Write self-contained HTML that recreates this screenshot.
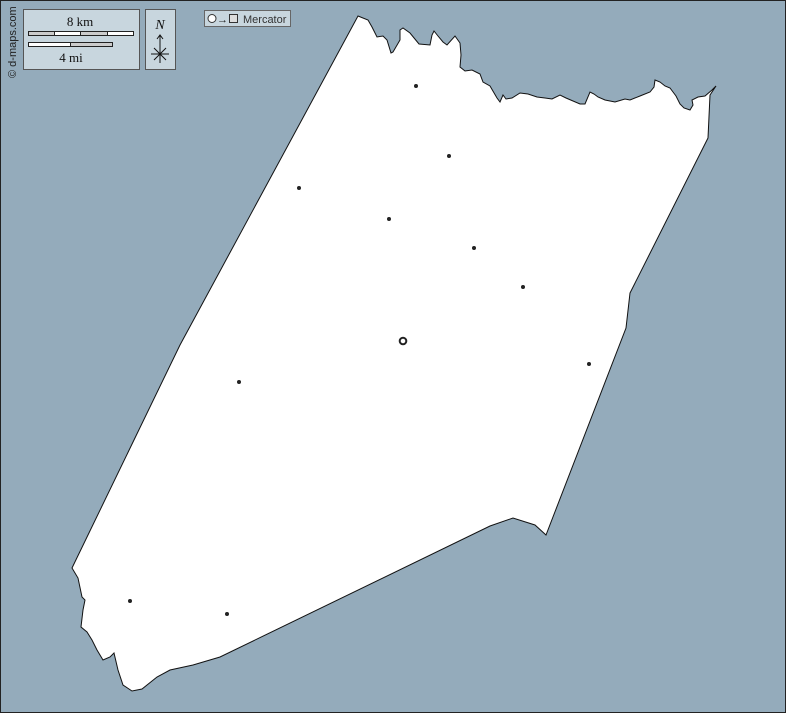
<!DOCTYPE html>
<html><head><style>
body{margin:0;width:786px;height:713px;overflow:hidden;background:#94abbb;font-family:"Liberation Serif",serif}
</style></head><body>
<svg width="786" height="713" style="position:absolute;left:0;top:0">
<rect x="0.5" y="0.5" width="785" height="712" fill="#94abbb" stroke="#222" stroke-width="1"/>
<path fill="#fff" stroke="#111" stroke-width="1" d="M358,16 L368,20 372,27 377,37 383,36 387,40 391,53 393,52 400,40 400,30 403,28 410,33 419,44 430,45 432,35 434,31 438,36 443,42 447,45 455,36 460,43 461,55 460,67 465,71 472,70 480,74 483,82 490,86 497,98 500,102 503,95 506,99 512,98 520,93 528,94 537,97 545,98 552,99 560,95 566,98 580,104 585,104 590,92 594,94 598,97 605,100 615,102 625,99 630,100 640,96 650,92 654,87 655,80 660,82 665,86 670,88 676,96 680,104 684,108 690,110 693,105 692,100 698,97 705,96 712,90 716,86 710,95 708,138 630,293 626,328 546,535 535,525 513,518 490,526 220,657 193,665 170,670 157,677 142,689 132,691 123,685 118,670 114,653 110,657 103,660 97,650 92,640 87,632 81,627 83,610 85,600 82,597 78,578 72,568 180,345 Z"/>
<g fill="#222">
<circle cx="416" cy="86" r="2"/><circle cx="449" cy="156" r="2"/><circle cx="299" cy="188" r="2"/><circle cx="389" cy="219" r="2"/><circle cx="474" cy="248" r="2"/><circle cx="523" cy="287" r="2"/><circle cx="589" cy="364" r="2"/><circle cx="239" cy="382" r="2"/><circle cx="130" cy="601" r="2"/><circle cx="227" cy="614" r="2"/>
</g>
<circle cx="403" cy="341" r="3.3" fill="none" stroke="#222" stroke-width="2"/>
<rect x="23.5" y="9.5" width="116" height="60" fill="#c8d6de" stroke="#555"/>
<text x="80" y="26" font-size="13" text-anchor="middle" fill="#111" font-family="Liberation Serif">8 km</text>
<rect x="28.5" y="31.5" width="105" height="4" fill="#fff" stroke="#222"/>
<rect x="28.5" y="31.5" width="26" height="4" fill="#ccc" stroke="#222"/>
<rect x="80.5" y="31.5" width="27" height="4" fill="#ccc" stroke="#222"/>
<rect x="28.5" y="42.5" width="84" height="4" fill="#ccc" stroke="#222"/>
<rect x="28.5" y="42.5" width="42" height="4" fill="#fff" stroke="#222"/>
<text x="71" y="62" font-size="13" text-anchor="middle" fill="#111" font-family="Liberation Serif">4 mi</text>
<rect x="145.5" y="9.5" width="30" height="60" fill="#c8d6de" stroke="#555"/>
<text x="160" y="29" font-size="14" font-style="italic" text-anchor="middle" fill="#111">N</text>
<path d="M160,35 V63 M157,39 L160,35 163,39 M151,54 H169 M154,48 L166,60 M166,48 L154,60" stroke="#111" stroke-width="1" fill="none"/>
<rect x="204.5" y="10.5" width="86" height="16" fill="#c8d6de" stroke="#666"/>
<circle cx="212" cy="18.5" r="4" fill="#fff" stroke="#333"/>
<text x="217" y="23" font-size="11" fill="#222" font-family="Liberation Sans">→</text>
<rect x="229.5" y="14.5" width="8" height="8" fill="#ddd" stroke="#333"/>
<text x="243" y="23" font-size="11" fill="#333" font-family="Liberation Sans">Mercator</text>
<text transform="translate(16,78) rotate(-90)" font-size="11" fill="#222" font-family="Liberation Sans">© d-maps.com</text>
</svg>
</body></html>
